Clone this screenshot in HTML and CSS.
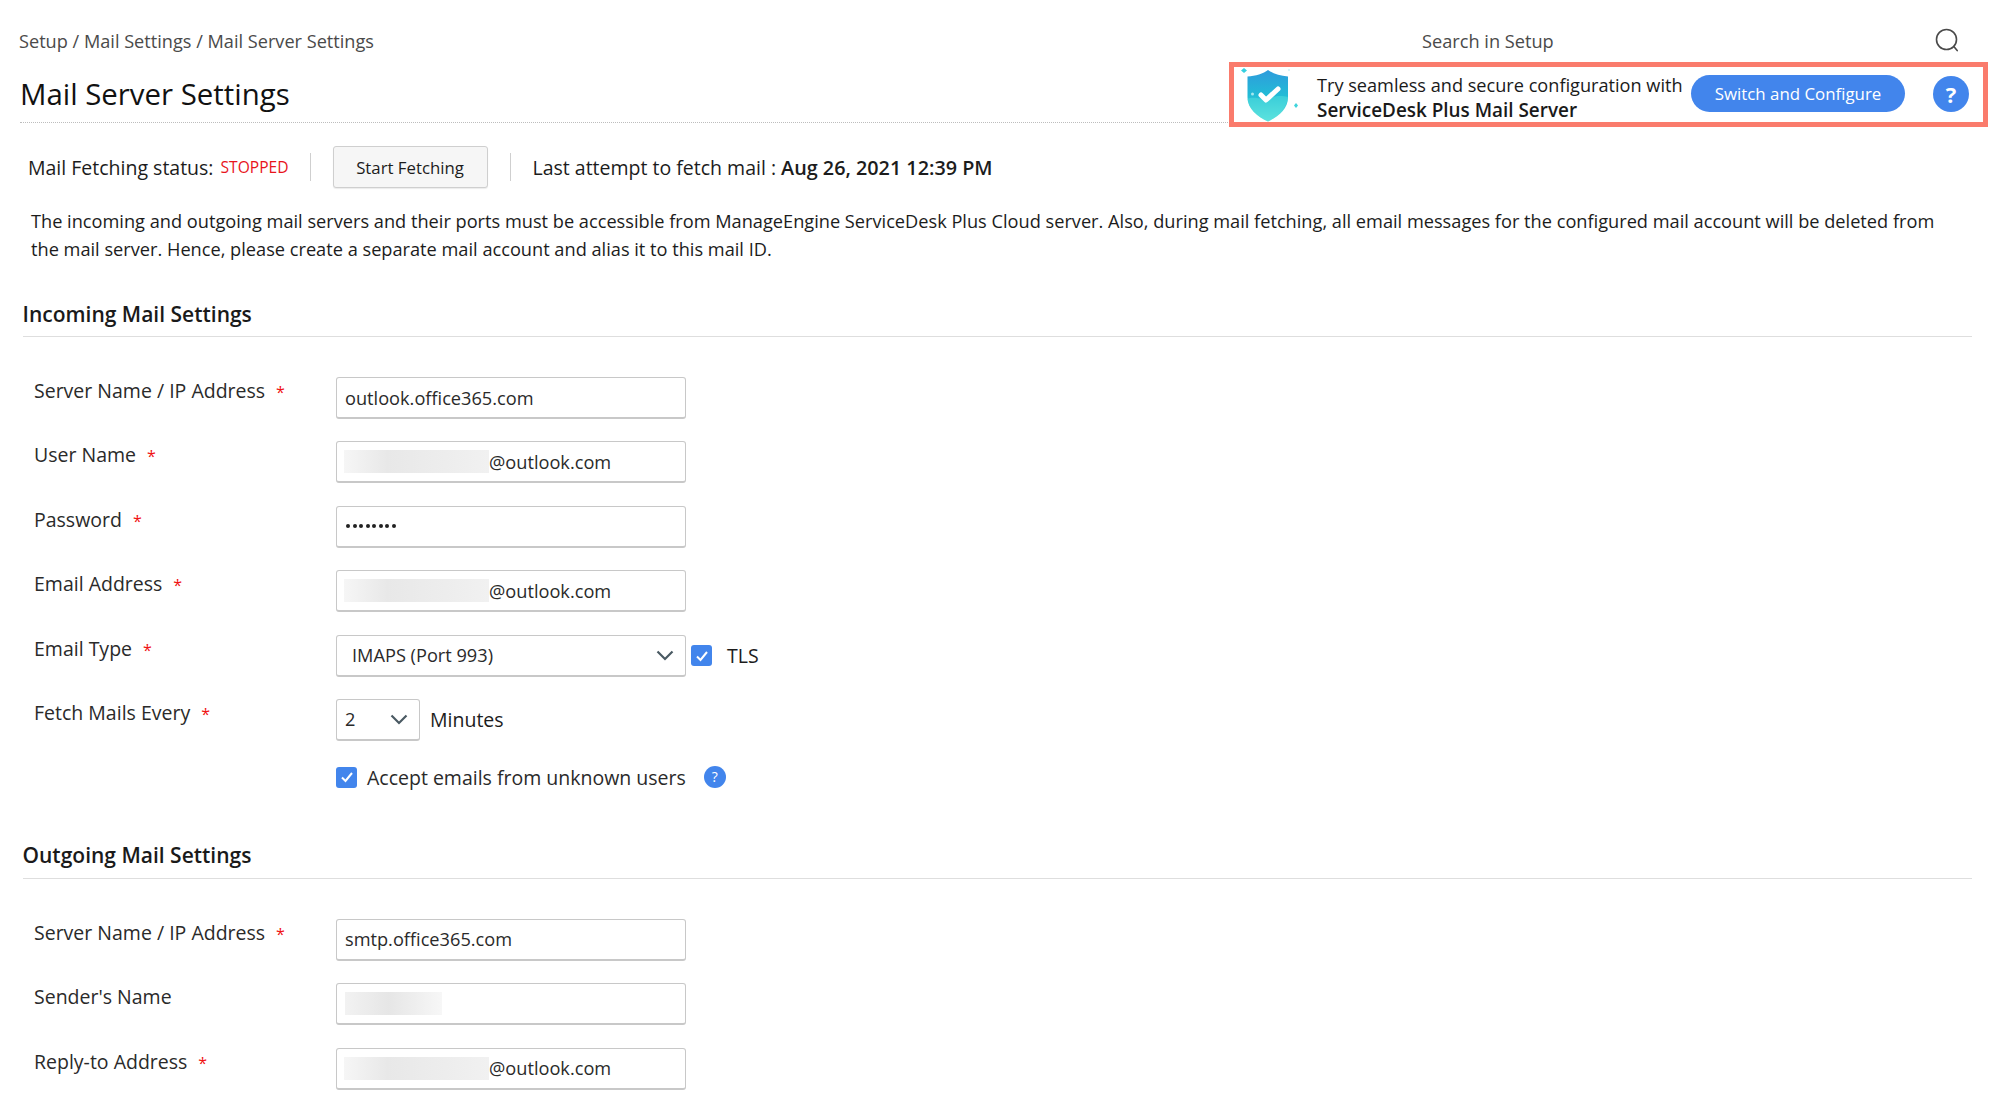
FILE: index.html
```html
<!DOCTYPE html>
<html lang="en">
<head>
<meta charset="utf-8">
<title>Mail Server Settings</title>
<link rel="stylesheet" href="styles.css">
</head>
<body>
<header class="topbar">
  <div class="crumbs">Setup / Mail Settings / Mail Server Settings</div>
  <div class="search">
    <span class="search-text">Search in Setup</span>
    <svg class="search-icon" width="28" height="28" viewBox="0 0 28 28" fill="none" stroke="#4a4a4a" stroke-width="1.6" stroke-linecap="round"><circle cx="13.5" cy="12.5" r="10"/><path d="M20.8 19.6l3.4 4"/></svg>
  </div>
</header>
<div class="titlebar">
  <h1 class="title">Mail Server Settings</h1>
  <div class="promo">
    <svg class="shield" width="58" height="55" viewBox="0 0 58 55">
      <defs>
        <linearGradient id="sg" x1="0" y1="0" x2="0" y2="1">
          <stop offset="0" stop-color="#2e9bdc"/>
          <stop offset="0.5" stop-color="#22bcd6"/>
          <stop offset="1" stop-color="#6feadf"/>
        </linearGradient>
      </defs>
      <path d="M4 1L7 3.500 4 6 1 3.500z" fill="#35d0e0"/>
      <circle cx="49" cy="3" r="1" fill="#cdeff4"/>
      <path d="M28 3c4.500 3.500 12 6 20 6.500v21c0 11-9 19-20 24C17 49.500 7.500 41.500 7.500 30.500v-21C15.500 9 23.500 6.500 28 3z" fill="url(#sg)"/>
      <path d="M7.500 32c7-3 12 1 20-1s13-3 20.500-1c-1 10-9.500 19.500-20 24.500C17 50 8.500 41 7.500 32z" fill="#4fdcdc" opacity=".55"/>
      <path d="M21 28l5 5 12-11" fill="none" stroke="#fff" stroke-width="5" stroke-linecap="round" stroke-linejoin="round"/>
      <path d="M56 36l2 2.500-2 2.500-2-2.500z" fill="#3fd4dc"/>
      <circle cx="12.500" cy="27" r="1.500" fill="#a5e8ee"/>
    </svg>
    <div class="promo-text">
      <div>Try seamless and secure configuration with</div>
      <strong class="promo-strong">ServiceDesk Plus Mail Server</strong>
    </div>
    <button class="switch" type="button">Switch and Configure</button>
    <span class="promo-help">?</span>
  </div>
</div>

<div class="status">
  <span>Mail Fetching status:</span>
  <span class="stopped">STOPPED</span>
  <span class="sep sep-a"></span>
  <button class="fetch" type="button">Start Fetching</button>
  <span class="sep sep-b"></span>
  <span>Last attempt to fetch mail : <b>Aug 26, 2021 12:39 PM</b></span>
</div>

<p class="note">The incoming and outgoing mail servers and their ports must be accessible from ManageEngine ServiceDesk Plus Cloud server. Also, during mail fetching, all email messages for the configured mail account will be deleted from the mail server. Hence, please create a separate mail account and alias it to this mail ID.</p>

<h2 class="section">Incoming Mail Settings</h2>
<div class="form">
  <div class="row"><label class="label">Server Name / IP Address<i class="req">*</i></label><div class="field">outlook.office365.com</div></div>
  <div class="row"><label class="label">User Name<i class="req">*</i></label><div class="field"><span class="blur blur-long"></span>@outlook.com</div></div>
  <div class="row"><label class="label">Password<i class="req">*</i></label><div class="field"><span class="dots"><i></i><i></i><i></i><i></i><i></i><i></i><i></i><i></i></span></div></div>
  <div class="row"><label class="label">Email Address<i class="req">*</i></label><div class="field"><span class="blur blur-long"></span>@outlook.com</div></div>
  <div class="row">
    <label class="label">Email Type<i class="req">*</i></label>
    <div class="field field-select"><span>IMAPS (Port 993)</span><svg width="18" height="11" viewBox="0 0 18 11" fill="none" stroke="#4a5a63" stroke-width="2.200"><path d="M1.500 1.500L9 9l7.500-7.500"/></svg></div>
    <span class="check check-tls"><svg width="14" height="12" viewBox="0 0 14 12" fill="none" stroke="#fff" stroke-width="2"><path d="M2 6.500l3.500 3.500L12 2"/></svg></span>
    <span class="tls">TLS</span>
  </div>
  <div class="row">
    <label class="label">Fetch Mails Every<i class="req">*</i></label>
    <div class="field field-select field-small"><span class="small-val">2</span><svg width="18" height="11" viewBox="0 0 18 11" fill="none" stroke="#4a5a63" stroke-width="2.200"><path d="M1.500 1.500L9 9l7.500-7.500"/></svg></div>
    <span class="minutes">Minutes</span>
  </div>
  <div class="row row-accept">
    <span class="check"><svg width="14" height="12" viewBox="0 0 14 12" fill="none" stroke="#fff" stroke-width="2"><path d="M2 6.500l3.500 3.500L12 2"/></svg></span>
    <span class="accept">Accept emails from unknown users</span>
    <span class="help">?</span>
  </div>
</div>

<h2 class="section section-out">Outgoing Mail Settings</h2>
<div class="form">
  <div class="row"><label class="label">Server Name / IP Address<i class="req">*</i></label><div class="field">smtp.office365.com</div></div>
  <div class="row"><label class="label">Sender's Name</label><div class="field"><span class="blur blur-short"></span></div></div>
  <div class="row"><label class="label">Reply-to Address<i class="req">*</i></label><div class="field"><span class="blur blur-long"></span>@outlook.com</div></div>
</div>
</body>
</html>
```

FILE: styles.css
```css
* { box-sizing: border-box; }

html, body {
  margin: 0;
  background: #fff;
}

body {
  font-family: "Open Sans", "Noto Sans", sans-serif;
  font-size: 19.500px;
  color: #1c1c1c;
  overflow: hidden;
  height: 1100px;
}

.topbar {
  display: flex;
  justify-content: space-between;
  align-items: center;
  height: 28px;
  margin: 27px 0 0 19px;
  padding-right: 39px;
}

.crumbs { color: #4a4a4a; font-size: 18.150px; }

.search { display: flex; align-items: center; color: #4a4a4a; }
.search-text { font-size: 18.200px; width: 511px; }
.search-icon { display: block; }

.titlebar {
  display: flex;
  justify-content: space-between;
  align-items: flex-start;
  height: 68px;
  margin-left: 20px;
  margin-right: 12px;
  border-bottom: 1px dotted #bdbdbd;
}

.title {
  margin: 19px 0 0;
  font-size: 29.400px;
  line-height: 40px;
  font-weight: 400;
  color: #111;
}

.promo {
  display: flex;
  align-items: center;
  width: 759px;
  height: 65px;
  margin-top: 7px;
  border: 5px solid #fa7b6c;
  background: #fff;
  padding-left: 6px;
  flex: none;
}

.shield { display: block; flex: none; align-self: flex-start; overflow: visible; }

.promo-text {
  margin-left: 19px;
  margin-top: 6px;
  width: 374px;
  line-height: 25px;
  font-size: 18.150px;
  color: #1a1a1a;
  white-space: nowrap;
}

.promo-strong { font-weight: 600; font-size: 18.900px; }

.switch {
  width: 214px;
  height: 37px;
  border: 0;
  border-radius: 19px;
  background: #4285ec;
  color: #fff;
  font: 400 16.850px "Open Sans", sans-serif;
  margin-top: -3px;
  flex: none;
}

.promo-help {
  width: 36px;
  height: 36px;
  margin-left: 28px;
  margin-top: -2px;
  border-radius: 50%;
  background: #4285ec;
  color: #fff;
  font-weight: 700;
  font-size: 22px;
  line-height: 36px;
  text-align: center;
  flex: none;
}

.status {
  display: flex;
  align-items: center;
  height: 42px;
  margin: 23px 0 0 28px;
  white-space: nowrap;
}

.status b { font-weight: 600; font-size: 19.800px; }

.stopped { color: #e8141c; font-size: 15.600px; margin-left: 7px; }

.sep { width: 1px; height: 28px; background: #cfcfcf; }
.sep-a { margin-left: 21px; }
.sep-b { margin-right: 22px; }

.fetch {
  width: 155px;
  height: 42px;
  margin: 0 22px;
  border: 1px solid #cfcfcf;
  border-radius: 3px;
  background: #f6f6f6;
  color: #1c1c1c;
  font: 400 16.800px "Open Sans", sans-serif;
  box-shadow: 0 1px 1px rgba(0,0,0,.08);
}

.note {
  margin: 19px 50px 0 31px;
  line-height: 28px;
  font-size: 18.200px;
  color: #1c1c1c;
}

.section {
  margin: 36px 28px 0 22.500px;
  padding-bottom: 7px;
  line-height: 30px;
  font-size: 21px;
  font-weight: 600;
  color: #1a1a1a;
  border-bottom: 1px solid #dedede;
}

.section-out { margin-top: 52px; padding-bottom: 8px; }

.form {
  display: flex;
  flex-direction: column;
  gap: 22.400px;
  margin: 40px 0 0 34px;
}

.row { display: flex; align-items: center; height: 42px; }

.label {
  width: 302px;
  flex: none;
  align-self: flex-start;
  line-height: 28px;
  color: #2a2a2a;
}

.req {
  color: #f01010;
  font-style: normal;
  margin-left: 11px;
  font-size: 16px;
}

.field {
  display: flex;
  align-items: center;
  width: 350px;
  height: 42px;
  padding-left: 8px;
  border: 1px solid #c8c8c8;
  border-bottom-width: 2px;
  border-radius: 3px;
  background: #fff;
  color: #2a2a2a;
  font-size: 18.200px;
}

.blur {
  display: block;
  height: 23px;
  flex: none;
  background: linear-gradient(90deg, #f6f6f6, #e8e8e8 30%, #ededed 70%, #f1f1f1);
}
.blur-long { width: 145px; margin-left: -1px; }
.blur-short { width: 97px; background: linear-gradient(90deg, #f2f2f2, #e6e6e6 45%, #f7f7f7); }

.dots { display: flex; gap: 2.500px; margin-left: 1px; }
.dots i { width: 4px; height: 4px; border-radius: 50%; background: #222; }

.field-select { justify-content: space-between; padding: 0 11px 0 15px; }
.field-small { width: 84px; padding-left: 8px; }
.small-val { display: block; }

.check {
  display: flex;
  align-items: center;
  justify-content: center;
  width: 21px;
  height: 21px;
  border-radius: 3px;
  background: #4285ec;
  flex: none;
}

.check-tls { margin-left: 5px; }
.tls { margin-left: 15px; }
.minutes { margin-left: 10px; }

.row-accept {
  height: 21px;
  margin-top: 3.600px;
  padding-left: 302px;
}

.accept { margin-left: 10px; color: #2a2a2a; }

.help {
  width: 22px;
  height: 22px;
  margin-left: 18px;
  border-radius: 50%;
  background: #4285ec;
  color: #fff;
  font-size: 14px;
  line-height: 22px;
  text-align: center;
}
```
